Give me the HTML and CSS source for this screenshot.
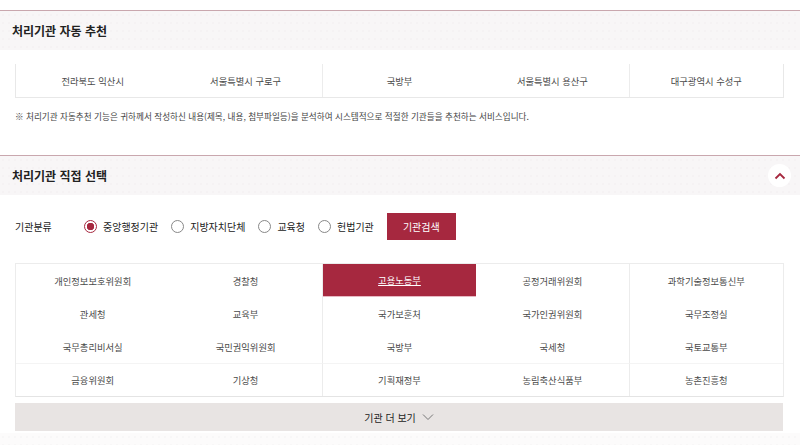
FILE: index.html
```html
<!DOCTYPE html>
<html lang="ko">
<head>
    <meta charset="UTF-8">
    <title>처리기관 선택</title>
    <link rel="stylesheet" href="styles.css">
</head>
<body>
    <div class="secao">
        <div class="cabecalho">
            <h2>처리기관 자동 추천</h2>
        </div>
        <ul class="lista-recomendada">
            <li>전라북도 익산시</li>
            <li class="divisor">서울특별시 구로구</li>
            <li>국방부</li>
            <li class="divisor">서울특별시 용산구</li>
            <li class="divisor">대구광역시 수성구</li>
        </ul>
        <p class="nota">※ 처리기관 자동추천 기능은 귀하께서 작성하신 내용(제목, 내용, 첨부파일등)을 분석하여 시스템적으로 적절한 기관들을 추천하는 서비스입니다.</p>
    </div>

    <div class="secao segunda">
        <div class="cabecalho">
            <h2>처리기관 직접 선택</h2>
            <button class="recolher" type="button">
                <svg width="12" height="8" viewBox="0 0 12 8"><path d="M1.5 6.5 L6 2 L10.5 6.5" fill="none" stroke="#a6283f" stroke-width="1.8"/></svg>
            </button>
        </div>
        <div class="filtro">
            <span class="rotulo">기관분류</span>
            <label class="opcao"><span class="radio marcado"></span>중앙행정기관</label>
            <label class="opcao"><span class="radio"></span>지방자치단체</label>
            <label class="opcao"><span class="radio"></span>교육청</label>
            <label class="opcao"><span class="radio"></span>헌법기관</label>
            <button class="botao-busca" type="button">기관검색</button>
        </div>
        <ul class="grade-orgaos">
            <li>개인정보보호위원회</li>
            <li class="divisor">경찰청</li>
            <li class="ativo">고용노동부</li>
            <li class="divisor">공정거래위원회</li>
            <li class="divisor">과학기술정보통신부</li>
            <li>관세청</li>
            <li class="divisor">교육부</li>
            <li>국가보훈처</li>
            <li class="divisor">국가인권위원회</li>
            <li class="divisor">국무조정실</li>
            <li>국무총리비서실</li>
            <li class="divisor">국민권익위원회</li>
            <li>국방부</li>
            <li class="divisor">국세청</li>
            <li class="divisor">국토교통부</li>
            <li class="linha">금융위원회</li>
            <li class="linha divisor">기상청</li>
            <li class="linha">기획재정부</li>
            <li class="linha divisor">농림축산식품부</li>
            <li class="linha divisor">농촌진흥청</li>
        </ul>
        <button class="mais" type="button">기관 더 보기
            <svg width="12" height="8" viewBox="0 0 12 8"><path d="M1 1.5 L6 6.5 L11 1.5" fill="none" stroke="#777" stroke-width="1"/></svg>
        </button>
    </div>
    <div class="faixa"></div>
</body>
</html>
```

FILE: styles.css
```css
body {
    margin: 0;
    padding: 0;
    background: #fff;
    font-family: "Noto Sans CJK KR", "Noto Sans", sans-serif;
    color: #333;
}
ul {
    list-style: none;
    margin: 0;
    padding: 0;
}
.secao {
    padding-top: 10px;
}
.secao.segunda {
    padding-top: 0;
    margin-top: 32px;
}
.cabecalho {
    height: 39px;
    border-top: 1px solid #c9a7ae;
    background-color: #f8f6f7;
    background-image: radial-gradient(#f0edef 0.5px, transparent 0.7px);
    background-size: 6px 8px;
    display: flex;
    align-items: center;
    justify-content: space-between;
    padding: 0 12px;
}
.cabecalho h2 {
    margin: 0;
    font-size: 12px;
    font-weight: 700;
    color: #222;
}
.recolher {
    width: 23px;
    height: 23px;
    border: none;
    border-radius: 50%;
    background: #fff;
    display: flex;
    align-items: center;
    justify-content: center;
    padding: 0;
    margin-right: -3px;
}
.lista-recomendada {
    margin: 14px 16px 0 15px;
    display: grid;
    grid-template-columns: repeat(5, 1fr);
    border-left: 1px solid #e8e8e8;
    border-right: 1px solid #e8e8e8;
    border-bottom: 1px solid #e8e8e8;
}
.lista-recomendada li {
    height: 33px;
    display: flex;
    align-items: center;
    justify-content: center;
    font-size: 9.3px;
    color: #4a4a4a;
}
.divisor {
    border-right: 1px solid #ececec;
}
.lista-recomendada li:last-child,
.grade-orgaos li:nth-child(5n) {
    border-right: none;
}
.nota {
    margin: 11px 0 0 15px;
    font-size: 8.6px;
    color: #444;
    line-height: 14px;
}
.filtro {
    display: flex;
    align-items: center;
    height: 27px;
    margin: 18px 0 0 15px;
    font-size: 10px;
    color: #222;
}
.rotulo {
    width: 69px;
    font-size: 10px;
}
.opcao {
    display: flex;
    align-items: center;
    margin-right: 13px;
}
.radio {
    width: 13px;
    height: 13px;
    border: 1px solid #888;
    border-radius: 50%;
    margin-right: 6px;
    box-sizing: border-box;
    background: #fff;
}
.radio.marcado {
    border-color: #a6283f;
    background: radial-gradient(#a6283f 3.5px, #fff 4px);
}
.botao-busca {
    height: 27px;
    width: 69px;
    border: none;
    background: #a6283f;
    color: #fff;
    font-family: inherit;
    font-size: 10px;
    padding: 0;
}
.grade-orgaos {
    margin: 23px 16px 0 15px;
    display: grid;
    grid-template-columns: repeat(5, 1fr);
    border: 1px solid #ececec;
    border-bottom-color: #e4e4e4;
}
.grade-orgaos li {
    height: 33px;
    display: flex;
    align-items: center;
    justify-content: center;
    font-size: 9.3px;
    color: #4a4a4a;
    box-sizing: border-box;
}
.grade-orgaos li.linha {
    border-top: 1px solid #f4f4f4;
}
.grade-orgaos li.ativo {
    background: #a6283f;
    color: #fff;
    text-decoration: underline;
    border-bottom: 1px solid #e7b9c3;
}
.mais {
    display: flex;
    align-items: center;
    justify-content: center;
    gap: 6px;
    width: 768px;
    height: 28px;
    margin: 6px 0 0 15px;
    border: none;
    background: #e8e4e3;
    font-family: inherit;
    font-size: 10px;
    color: #222;
    padding: 0;
}
.faixa {
    height: 12px;
    margin-top: 2px;
    background-color: #fcfbfb;
    background-image: radial-gradient(#f2f0f1 0.5px, transparent 0.7px);
    background-size: 6px 8px;
}
```
